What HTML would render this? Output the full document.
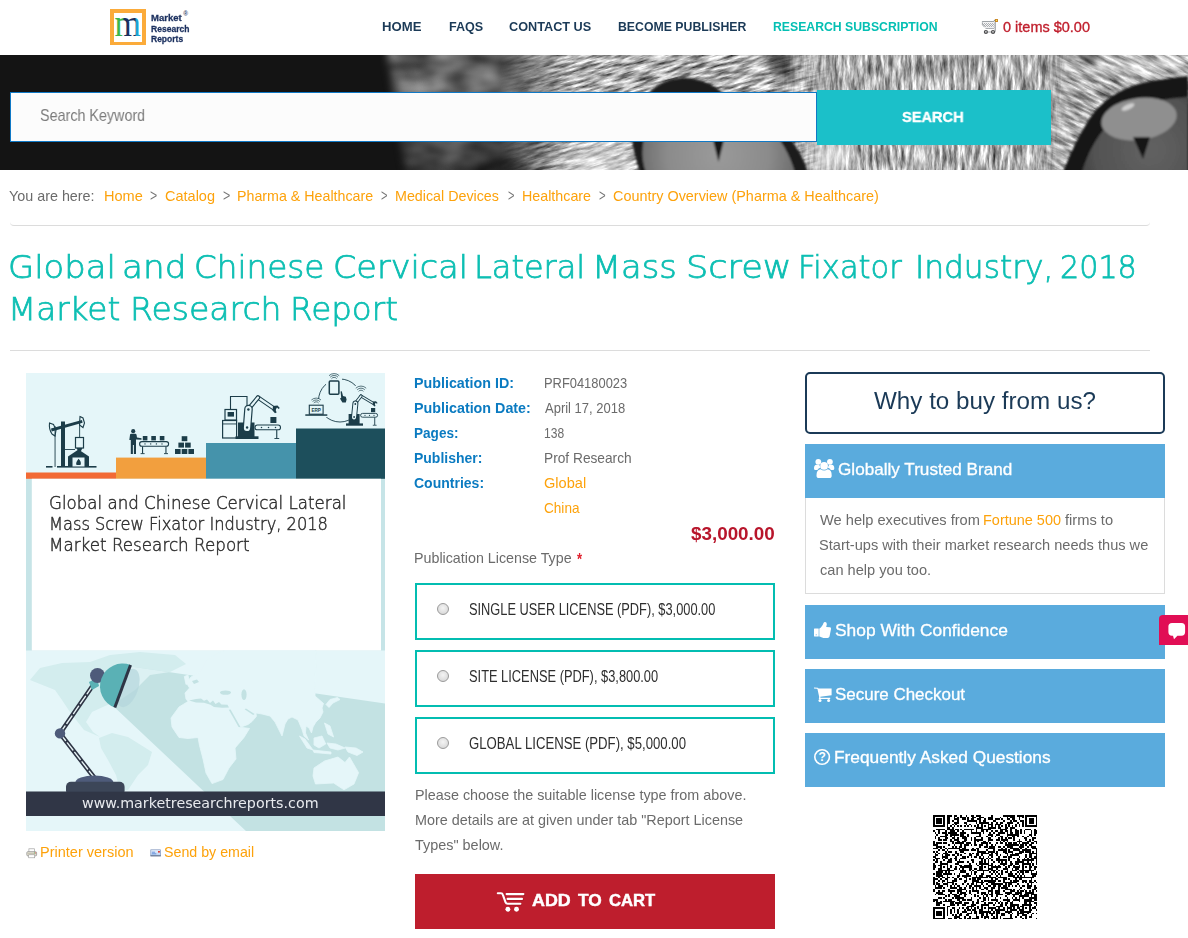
<!DOCTYPE html>
<html lang="en">
<head>
<meta charset="utf-8">
<title>Global and Chinese Cervical Lateral Mass Screw Fixator Industry, 2018 Market Research Report</title>
<style>
*{box-sizing:border-box;margin:0;padding:0}
html,body{width:1188px;height:938px;overflow:hidden;background:#fff}
body{font-family:"Liberation Sans",sans-serif;color:#666;position:relative}
.t{position:absolute;white-space:nowrap;display:block}
.b{position:absolute}
svg{position:absolute;overflow:visible}
#logo{left:110px;top:9px;width:36px;height:36px;border:4px solid #fbab3a;border-bottom-width:3px;background:#fff}
#banner{left:0;top:55px;width:1188px;height:115px;background:#141414;overflow:hidden}
#sinput{left:10px;top:92px;width:807px;height:50px;background:#fcfcfc;border:1px solid #1079c6}
#sbtn{left:817px;top:90px;width:234px;height:55px;background:#1bc0c9}
.hr{position:absolute;left:10px;width:1140px;height:1px;background:#dcdcdc}
.hr.r{height:5px;background:none;border-bottom:1px solid #dcdcdc;border-radius:0 0 4px 4px}
.lic{position:absolute;left:415px;width:360px;height:57px;border:2px solid #03bdb1;background:#fff}
.radio{position:absolute;left:20px;top:17.7px;width:12px;height:12px;border-radius:50%;border:1px solid #9a9a9a;background:radial-gradient(circle at 50% 40%,#f4f4f4 0,#dcdcdc 70%,#cfcfcf 100%)}
#cartbtn{left:415px;top:874px;width:360.3px;height:54.5px;background:#be1e2d}
#why{left:805px;top:371.6px;width:360px;height:62.2px;border:2px solid #1b3a57;border-radius:5px;background:#fff}
.sh{position:absolute;left:805px;width:360px;height:53.6px;background:#5aabdd}
#sbody{left:805px;top:497.6px;width:360px;height:96.8px;border:1px solid #dcdcdc;border-top:0;background:#fff}
#chat{left:1159px;top:615px;width:40px;height:30px;background:#e10e55;border-radius:4px 0 0 0}
</style>
</head>
<body>
<!-- header -->
<div class="b" id="logo"></div>
<svg width="36" height="36" viewBox="110 9 36 36" style="left:110px;top:9px"><defs><linearGradient id="mg" x1="0" x2="1" y1="0" y2="0"><stop offset="0" stop-color="#3bb54a"/><stop offset="0.30" stop-color="#3bb54a"/><stop offset="0.36" stop-color="#1a2f5e"/><stop offset="0.76" stop-color="#1a2f5e"/><stop offset="0.82" stop-color="#1ca3d4"/><stop offset="1" stop-color="#1ca3d4"/></linearGradient></defs><text x="114.6" y="35.6" font-family="Liberation Serif,serif" font-size="37" textLength="26.4" lengthAdjust="spacingAndGlyphs" fill="url(#mg)">m</text></svg>

<svg width="18" height="17" viewBox="981 18 18 17" style="left:981px;top:18px">
<defs><clipPath id="bk"><path d="M982.4 21.5 H994.6 V28.2 H985.7 L982.4 24.8 Z"/></clipPath></defs>
<path d="M982.4 21.5 H994.6 V28.2 H985.7 L982.4 24.8 Z" fill="#f4f5f6"/>
<g clip-path="url(#bk)" stroke="#8f9296" stroke-width="0.5" fill="none"><path d="M983 29 L990 22 M985 29 L992 22 M987 29 L994 22 M989 29 L996 22 M981 29 L988 22 M979 29 L986 22 M983 22 L990 29 M985 22 L992 29 M987 22 L994 29 M989 22 L996 29 M981 22 L988 29 M991 22 L998 29"/></g>
<path d="M982.4 21.5 H993.4 M982.4 21.3 V24.8 L985.7 28.3 H994" fill="none" stroke="#858b90" stroke-width="0.8"/>
<path d="M982.6 22.6 H994.6 M983.6 27.4 H994" stroke="#f4f5f6" stroke-width="1" fill="none"/>
<path d="M993.2 21.6 L995.2 19.8 V30.8 Q995.2 32.6 993.6 32.8" fill="none" stroke="#7d8388" stroke-width="0.9"/>
<rect x="987.6" y="31.5" width="4" height="1" fill="#a9acb0"/>
<rect x="994.95" y="19" width="3" height="3" fill="#c98520"/><rect x="995.9" y="19.9" width="1.1" height="1.1" fill="#f7e65a"/>
<circle cx="985.9" cy="32" r="2.1" fill="#4a4a4c"/><circle cx="985.9" cy="31.8" r="0.9" fill="#d8d8d8"/>
<circle cx="993" cy="32" r="2.1" fill="#4a4a4c"/><circle cx="993" cy="31.8" r="0.9" fill="#d8d8d8"/>
</svg>

<!-- banner -->
<div class="b" id="banner"><svg width="1188" height="115" viewBox="0 0 1188 115" style="left:0;top:0">
<defs>
<filter id="furH" x="0" y="0" width="100%" height="100%" color-interpolation-filters="sRGB">
<feTurbulence type="fractalNoise" baseFrequency="0.055 0.34" numOctaves="4" seed="7"/>
<feColorMatrix type="matrix" values="1.35 0 0 0 0.0  1.35 0 0 0 0.0  1.35 0 0 0 0.0  0 0 0 0 1"/>
<feGaussianBlur stdDeviation="0.5"/>
</filter>
<filter id="furV" x="0" y="0" width="100%" height="100%" color-interpolation-filters="sRGB">
<feTurbulence type="fractalNoise" baseFrequency="0.26 0.045" numOctaves="4" seed="11"/>
<feColorMatrix type="matrix" values="1.2 0 0 0 0.09  1.2 0 0 0 0.09  1.2 0 0 0 0.09  0 0 0 0 1"/>
<feGaussianBlur stdDeviation="0.5"/>
</filter>
<filter id="blob" x="0" y="0" width="100%" height="100%" color-interpolation-filters="sRGB">
<feTurbulence type="fractalNoise" baseFrequency="0.03 0.05" numOctaves="2" seed="3"/>
<feColorMatrix type="matrix" values="0.6 0 0 0 0.08  0.6 0 0 0 0.08  0.6 0 0 0 0.08  0 0 0 0 1"/>
</filter>
<filter id="bl8"><feGaussianBlur stdDeviation="8"/></filter>
<filter id="bl4"><feGaussianBlur stdDeviation="4"/></filter>
<filter id="bl2"><feGaussianBlur stdDeviation="2"/></filter>
<filter id="bl1"><feGaussianBlur stdDeviation="0.9"/></filter>
<linearGradient id="gA" x1="0" x2="1" y1="0" y2="0"><stop offset="0" stop-color="#000"/><stop offset="0.2" stop-color="#fff"/><stop offset="0.9" stop-color="#fff"/><stop offset="1" stop-color="#000"/></linearGradient>
<linearGradient id="gB" x1="0" x2="1" y1="0" y2="0"><stop offset="0" stop-color="#000"/><stop offset="0.22" stop-color="#fff"/><stop offset="0.8" stop-color="#fff"/><stop offset="1" stop-color="#000"/></linearGradient>
<linearGradient id="gD" x1="0" x2="0" y1="0" y2="1"><stop offset="0" stop-color="#000" stop-opacity="0"/><stop offset="0.45" stop-color="#000" stop-opacity="0.05"/><stop offset="1" stop-color="#000" stop-opacity="0.42"/></linearGradient>
<linearGradient id="gZr" x1="0" x2="1" y1="0" y2="0"><stop offset="0" stop-color="#000" stop-opacity="0"/><stop offset="0.7" stop-color="#000" stop-opacity="1"/><stop offset="1" stop-color="#000" stop-opacity="1"/></linearGradient>
<linearGradient id="gZ" x1="0" x2="1" y1="0" y2="0"><stop offset="0" stop-color="#000"/><stop offset="0.1" stop-color="#fff"/><stop offset="0.7" stop-color="#fff"/><stop offset="1" stop-color="#000"/></linearGradient>
<mask id="mZ"><path d="M386 -10 L600 -10 L600 125 L408 125 Q398 60 386 -10 Z" fill="#fff" filter="url(#bl4)"/><rect x="540" y="0" width="80" height="115" fill="url(#gZr)"/></mask>
<mask id="mA"><rect x="500" y="0" width="350" height="115" fill="url(#gA)"/></mask>
<mask id="mB"><rect x="770" y="0" width="340" height="115" fill="url(#gB)"/></mask>
<mask id="mC"><path d="M1062 -20 L1210 -20 L1210 40 C1140 42 1090 70 1070 135 L1046 135 Z" fill="#fff" filter="url(#bl8)"/></mask>
<radialGradient id="irisL" gradientUnits="userSpaceOnUse" cx="718" cy="100" r="85"><stop offset="0" stop-color="#9a9a9a"/><stop offset="0.6" stop-color="#8b8b8b"/><stop offset="1" stop-color="#666"/></radialGradient>
<radialGradient id="irisR" gradientUnits="userSpaceOnUse" cx="1150" cy="95" r="80"><stop offset="0" stop-color="#626262"/><stop offset="0.7" stop-color="#525252"/><stop offset="1" stop-color="#3a3a3a"/></radialGradient>
<clipPath id="cb"><rect width="1188" height="115"/></clipPath>
</defs>
<g clip-path="url(#cb)">
<rect width="1188" height="115" fill="#141414"/>
<!-- blurry left cheek -->
<g mask="url(#mZ)"><rect x="380" y="0" width="230" height="115" filter="url(#blob)"/><rect x="380" y="0" width="230" height="115" fill="url(#gD)"/></g>
<!-- diagonal fur -->
<g mask="url(#mA)"><g transform="rotate(-16 640 20)"><rect x="460" y="-140" width="460" height="400" filter="url(#furH)"/></g></g>
<!-- vertical fur -->
<g mask="url(#mB)"><rect x="770" y="0" width="340" height="115" filter="url(#furV)"/></g>
<!-- fur over right eye -->
<g mask="url(#mC)"><g transform="rotate(-64 1100 60)"><rect x="950" y="-90" width="300" height="320" filter="url(#furV)"/></g></g>
<!-- soft tonal shading -->
<g filter="url(#bl8)">
<ellipse cx="600" cy="108" rx="40" ry="22" fill="#fff" opacity="0.45"/>
<ellipse cx="830" cy="104" rx="22" ry="20" fill="#fff" opacity="0.5"/>
<ellipse cx="1135" cy="10" rx="60" ry="9" fill="#fff" opacity="0.4"/>
<ellipse cx="510" cy="112" rx="16" ry="12" fill="#000" opacity="0.5"/>
</g>
<g filter="url(#bl4)">
<path d="M762 -5 L790 -5 L794 28 L780 22 Z" fill="#000" opacity="0.6"/>
<path d="M1080 -5 L1100 -5 L1096 10 L1084 10 Z" fill="#000" opacity="0.6"/>
</g>
<!-- left eye -->
<g filter="url(#bl1)">
<path d="M632 84 C630 56 650 23 684 23 C704 23 718 33 726 41 C762 52 800 84 808 118 L640 118 C636 104 633 94 632 84 Z" fill="#1b1b1b"/>
<path d="M646 118 C634 84 652 46 700 40 C756 44 786 84 795 118 Z" fill="url(#irisL)"/>
<path d="M713 85 L724 85 L718.5 107 Z" fill="#171717"/>
</g>
<!-- right eye -->
<g filter="url(#bl1)">
<path d="M1061 120 L1064 115 C1070 98 1078 82 1088 66 C1098 50 1112 38 1135 30 C1152 25 1170 23 1188 21 L1188 120 Z" fill="#151515"/>
<path d="M1081 120 C1088 95 1100 76 1114 64 C1130 50 1160 44 1188 42 L1188 120 Z" fill="url(#irisR)"/>
<ellipse cx="1139" cy="64" rx="38" ry="21" transform="rotate(-8 1139 64)" fill="#8f8f8f"/>
<ellipse cx="1128" cy="52" rx="7" ry="2.6" transform="rotate(-25 1128 52)" fill="#d0d0d0"/>
<path d="M1133 82 L1150 82 L1143 104 Z" fill="#141414"/>
</g>
</g>
</svg>
</div>
<div class="b" id="sinput"></div>
<div class="b" id="sbtn"></div>
<div class="hr r" style="top:221px"></div>
<div class="hr" style="top:350px"></div>
<!-- cover -->
<svg width="359" height="458" viewBox="26 373 359 458" style="left:26px;top:373px">
<defs>
<clipPath id="cone"><path d="M130.5 666.5 L386 703.6 L386 832 L247 832 L114.8 707.5 Z"/></clipPath>
<clipPath id="btm"><rect x="26" y="650.5" width="359" height="181"/></clipPath>
<clipPath id="cvr"><rect x="26" y="373" width="359" height="458"/></clipPath>
<g id="landE" stroke-linejoin="round">
<path d="M186 699 L185 693 L189.5 688 L186.5 683 L191 677 L200 672 L206 660 L232 646 L316 646 L315 696 L319 699.5 L323.5 703.5 L322 708 L323 712 L320 718 L316 722 L313 727 L311.5 733 L309 728 L306 726 L305.5 733 L308.6 740 L304 736 L302 729.5 L298 720 L292 717 L288 719 L285 724 L282 736 L279 730 L275 722 L270 716 L262 714 L256 713 L256.4 716.4 L252 721.5 L248 724.5 L240.5 727.2 L249.5 728.5 L244 737.5 L235 748 L236 759 L229 768 L223 779.5 L212 783.6 L206 773 L203 759 L199.5 745.5 L198 737.5 L188 738.5 L179 737.5 L172 727 L171 718 L179 707 L188 701.5 Z"/>
<path d="M184.3 676.5 L188 675 L189.6 682.5 L186 684.5 Z"/>
<path d="M326 704.5 L330 699.5 L337.5 697.5 L340 699.5 L333 703 L329 707.5 Z"/>
<path d="M324.5 723 L330 726 L333.6 737 L328 734 Z"/>
<path d="M299.5 736 L305 739 L313 750 L307 748 Z"/>
<path d="M313 750 L331 752 L331 754 L314 752.5 Z"/>
<path d="M314 738 L322 736 L325.7 744 L319 748 L314 745 Z"/>
<path d="M327 743 L336 744 L345 748 L338 750 L330 748 Z"/>
<path d="M345 747 L356 748 L363 752 L357 755.5 L348 752 Z"/>
<path d="M314 768 L324.5 761 L338 757 L345 762.5 L349.5 757 L358.6 772.7 L354 784 L344 789.8 L333.6 783 L315.5 784 L313 776 Z"/>
</g>
<g id="seas">
<path d="M189 700.6 L196 699 L201 698.6 L204 700.8 L207 699.4 L210 703 L213 700.6 L215.5 704 L219 702 L221.5 704.6 L227.5 704.8 L229 707.6 L222 707.8 L214 707 L210.5 704.8 L204 702.8 L196 702.6 Z"/>
<ellipse cx="225.5" cy="692.6" rx="5.6" ry="2.2"/>
<ellipse cx="244" cy="694.6" rx="2.6" ry="5.4"/>
<path d="M228.8 709.8 L230.6 709.4 L240.6 727.2 L238.6 727 Z"/>
<path d="M244.6 709.2 L246 708.6 L254.6 714 L253.2 715 Z"/>
<path d="M192 681 L197 679.5 L199 682 L194 684 Z"/>
</g>
<g id="landW">
<path d="M30 680 L40 668 L62 663 L90 662 L110 655 L140 652 L175 655 L186 664 L170 672 L150 675 L135 690 L120 700 L105 706 L92 712 L86 722 L93 732 L100 737 L84 730 L70 712 L62 700 L55 690 L45 686 Z"/>
<path d="M99 738 L112 733 L128 737 L152 752 L148 765 L138 775 L128 790 L120 791 L116 775 L108 760 L101 748 Z"/>
</g>
</defs>
<g clip-path="url(#cvr)">
<rect x="26" y="373" width="359" height="458" fill="#e5f6f9"/>
<!-- steps -->
<rect x="26" y="472.5" width="90" height="6.5" fill="#f26a35"/>
<rect x="116" y="457.6" width="90" height="21.4" fill="#f29f3e"/>
<rect x="206" y="443" width="90" height="36" fill="#4593ab"/>
<rect x="296" y="428.5" width="89" height="50.5" fill="#1d4f5c"/>
<!-- white panel -->
<rect x="26" y="478.8" width="359" height="171.7" fill="#c6e4e7"/>
<rect x="31.8" y="478.8" width="349.2" height="171.7" fill="#fff"/>
<!-- map -->
<use href="#landW" fill="#d3edee"/>
<g clip-path="url(#cone)">
<rect x="26" y="640" width="359" height="200" fill="#c3e2e3"/>
<use href="#landW" fill="#dcf1f3"/>
<ellipse cx="128" cy="688" rx="10" ry="20" transform="rotate(20 128 688)" fill="#b3d6dc" opacity=".7"/>
</g>
<g clip-path="url(#btm)"><use href="#landE" fill="#e5f6f9" stroke="#e5f6f9" stroke-width="0.8"/>
<use href="#seas" fill="#c3e2e3"/></g>
<!-- band -->
<rect x="26" y="791.7" width="359" height="24.3" fill="#303646"/>
<!-- lamp -->
<g stroke-linecap="round">
<line x1="60" y1="733.4" x2="93.8" y2="777" stroke="#2e3545" stroke-width="4.6"/>
<line x1="60" y1="733.4" x2="93.8" y2="777" stroke="#e8f4f6" stroke-width="1.4" stroke-dasharray="9 3"/>
<line x1="60" y1="733.4" x2="92.8" y2="685.5" stroke="#2e3545" stroke-width="4.6"/>
<line x1="60" y1="733.4" x2="92.8" y2="685.5" stroke="#e8f4f6" stroke-width="1.4" stroke-dasharray="9 3"/>
</g>
<circle cx="60" cy="733.4" r="5.2" fill="#4e5b7a"/>
<path d="M89 682 L97 678 L99 686 L92 690 Z" fill="#5ab1b5"/>
<circle cx="97.5" cy="675.5" r="7.5" fill="#4e5b7a"/>
<path d="M130.5 665 A22.65 22.65 0 0 0 114.8 707.5 Z" fill="#5ab1b5"/>
<line x1="130.5" y1="665" x2="114.8" y2="707.5" stroke="#2e3545" stroke-width="3"/>
<ellipse cx="94.4" cy="782.5" rx="19" ry="7" fill="#4e5b7a"/>
<rect x="66" y="781.8" width="58.6" height="14" rx="5" fill="#3c4658"/>
<rect x="26" y="791.7" width="359" height="24.3" fill="#303646"/>
<g fill="#1c3d49" stroke="none">
<!-- pump jack -->
<rect x="46" y="466" width="6.5" height="1.6"/><rect x="57" y="466" width="39.5" height="1.6"/>
<rect x="54.6" y="426" width="0.9" height="41"/>
<rect x="61" y="421.5" width="4" height="45"/>
<path d="M51 428.5 L82 420 L82.6 422.8 L51.7 431.5 Z"/>
<path d="M49.5 423 L53.5 424.5 L56 430 L55 436 L52 434 C50 431 49 427 49.5 423 Z" fill="none" stroke="#1c3d49" stroke-width="1.1"/>
<path d="M80 416.5 L83 418 L84.5 423 L83 427.5 L79.5 425 Z" fill="none" stroke="#1c3d49" stroke-width="1.1"/>
<rect x="79.2" y="424" width="0.9" height="14"/>
<rect x="75.5" y="437.5" width="8" height="10.5" fill="#e5f6f9" stroke="#1c3d49" stroke-width="1.2"/>
<path d="M76.5 448 L82.5 448 L81 451 L78 451 Z"/>
<rect x="65" y="449" width="10" height="0.9"/>
<path d="M68 456.5 L78.5 449.5 L89 456.5 L89 466.5 L68 466.5 Z"/>
<rect x="72.5" y="457.5" width="12" height="9" fill="#e5f6f9"/>
<path d="M78.5 458.8 C80.5 461 81.5 462.5 80.5 465 L76.5 465 C75.5 463 76.8 461.5 78.5 458.8 Z"/>
<!-- worker -->
<circle cx="133.2" cy="431.2" r="2.1"/>
<path d="M130 435 Q130 433.8 131.2 433.8 L135.2 433.8 Q136.4 433.8 136.6 435 L137 437.6 L141.5 438.3 L141.5 439.8 L136 439.4 L136 454 L133.9 454 L133.9 445 L132.9 445 L132.9 454 L130.8 454 L130.8 440 L129.3 440 Z"/>
<rect x="142.8" y="436" width="4.6" height="4.4"/><rect x="151.3" y="436" width="4.6" height="4.4"/><rect x="159.8" y="436" width="4.6" height="4.4"/>
<rect x="139.6" y="441.6" width="29" height="4.6" rx="2.3" fill="#e5f6f9" stroke="#1c3d49" stroke-width="1.1"/>
<circle cx="145" cy="443.9" r="0.7"/><circle cx="150.7" cy="443.9" r="0.7"/><circle cx="156.4" cy="443.9" r="0.7"/><circle cx="162" cy="443.9" r="0.7"/>
<rect x="142" y="446.5" width="1.1" height="7"/><rect x="165.4" y="446.5" width="1.1" height="7"/><rect x="140.6" y="453.2" width="4" height="0.9"/><rect x="164" y="453.2" width="4" height="0.9"/>
<!-- pile -->
<rect x="175" y="449" width="5.6" height="5"/><rect x="181.7" y="449" width="5.6" height="5"/><rect x="188.4" y="449" width="5.6" height="5"/>
<rect x="178.4" y="442.6" width="5.6" height="5"/><rect x="185.1" y="442.6" width="5.6" height="5"/>
<rect x="181.7" y="436.2" width="5.6" height="5"/>
<!-- robot 1 -->
<path d="M230.5 409 L230.5 396.5 L247 396.5 L247 406" fill="none" stroke="#1c3d49" stroke-width="1.1"/>
<rect x="222.6" y="420.5" width="14" height="17.5" fill="#e5f6f9" stroke="#1c3d49" stroke-width="1.2"/>
<rect x="222.6" y="423.5" width="14" height="0.9"/>
<rect x="225" y="409.5" width="11.5" height="10.5" fill="#e5f6f9" stroke="#1c3d49" stroke-width="1.2"/>
<rect x="227.6" y="412" width="6.4" height="4.6"/>
<rect x="238" y="422.5" width="16.5" height="14.5"/><rect x="235.5" y="436.3" width="23" height="2.7"/>
<path d="M258 397.5 L274 408.5" fill="none" stroke="#1c3d49" stroke-width="4.4" stroke-linecap="round"/>
<path d="M258 397.5 L274 408.5" fill="none" stroke="#e5f6f9" stroke-width="2.2" stroke-linecap="round"/>
<path d="M248.5 409 L258 397.5" fill="none" stroke="#1c3d49" stroke-width="4.4" stroke-linecap="round"/>
<path d="M248.5 409 L258 397.5" fill="none" stroke="#e5f6f9" stroke-width="2.2" stroke-linecap="round"/>
<path d="M247 428 L248.5 409" fill="none" stroke="#1c3d49" stroke-width="8.6" stroke-linecap="round"/>
<path d="M247 428 L248.5 409" fill="none" stroke="#e5f6f9" stroke-width="6.2" stroke-linecap="round"/>
<circle cx="248.4" cy="409.5" r="1.2"/><circle cx="247.1" cy="427.5" r="1.2"/>
<path d="M273 406 L277.5 405.5 L279.8 408 L278.6 409 L277 407.6 L275.5 409.5 L276.6 412.4 L275 413.2 L272.5 410.5 Z"/>
<rect x="270.4" y="417" width="6" height="6"/>
<rect x="255" y="425" width="25.5" height="4.8" rx="2.4" fill="#e5f6f9" stroke="#1c3d49" stroke-width="1.1"/>
<circle cx="261.5" cy="427.4" r="0.75"/><circle cx="268.5" cy="427.4" r="0.75"/><circle cx="275.5" cy="427.4" r="0.75"/>
<rect x="276.2" y="430" width="1.1" height="8.5"/><rect x="274.4" y="438" width="4.8" height="0.9"/>
<!-- IoT -->
<circle cx="340" cy="400.5" r="21.5" fill="none" stroke="#1c3d49" stroke-width="0.9"/>
<rect x="305" y="399" width="23" height="18" fill="#e5f6f9"/>
<rect x="326" y="378" width="16" height="20" fill="#e5f6f9"/>
<rect x="350" y="386" width="30" height="40" fill="#e5f6f9"/>
<rect x="329.3" y="381" width="9.6" height="13.2" rx="1" fill="#e5f6f9" stroke="#1c3d49" stroke-width="1.5"/>
<g fill="none" stroke="#1c3d49" stroke-width="0.7"><path d="M331.5 378.7 A3.2 3.2 0 0 1 336.7 378.7"/><path d="M330.2 377.2 A5.2 5.2 0 0 1 338 377.2"/><path d="M329 375.7 A7.2 7.2 0 0 1 339.2 375.7"/></g>
<path d="M340.6 391.5 L341.8 391.2 L343 396 L345.8 396.8 L346.6 399.6 L345.8 402.6 L342.4 402.6 L340 398.6 L341.2 397.8 Z"/>
<rect x="309.3" y="405.2" width="13.8" height="9" fill="#e5f6f9" stroke="#1c3d49" stroke-width="1.1"/>
<rect x="305.3" y="414.3" width="22" height="1.5"/>
<g fill="none" stroke="#1c3d49" stroke-width="0.7"><path d="M313.8 403 A3 3 0 0 1 318.6 403"/><path d="M312.6 401.5 A5 5 0 0 1 319.8 401.5"/><path d="M311.4 400 A7 7 0 0 1 321 400"/></g>
<g fill="none" stroke="#1c3d49" stroke-width="0.7"><path d="M358.6 391.4 A3 3 0 0 1 363.4 391.4"/><path d="M357.2 389.8 A5.2 5.2 0 0 1 364.8 389.8"/><path d="M355.8 388.2 A7.4 7.4 0 0 1 366.2 388.2"/></g>
<rect x="348.6" y="414" width="11" height="10"/><rect x="346" y="423.4" width="17" height="2.3"/>
<path d="M361 396 L373.5 403.5" fill="none" stroke="#1c3d49" stroke-width="3.2" stroke-linecap="round"/>
<path d="M361 396 L373.5 403.5" fill="none" stroke="#e5f6f9" stroke-width="1.4" stroke-linecap="round"/>
<path d="M355.6 403 L361 396" fill="none" stroke="#1c3d49" stroke-width="3.2" stroke-linecap="round"/>
<path d="M355.6 403 L361 396" fill="none" stroke="#e5f6f9" stroke-width="1.4" stroke-linecap="round"/>
<path d="M354 417.5 L355.4 403.5" fill="none" stroke="#1c3d49" stroke-width="6" stroke-linecap="round"/>
<path d="M354 417.5 L355.4 403.5" fill="none" stroke="#e5f6f9" stroke-width="4" stroke-linecap="round"/>
<circle cx="355.3" cy="404" r="0.9"/><circle cx="354.1" cy="417" r="0.9"/>
<path d="M373 401.5 L376 401.2 L377.6 403 L376.8 403.7 L375.8 402.8 L374.8 404 L375.5 406 L374.4 406.5 L372.6 404.6 Z"/>
<rect x="371" y="408" width="4.2" height="4.2"/>
<rect x="360.6" y="413.4" width="17" height="3.8" rx="1.9" fill="#e5f6f9" stroke="#1c3d49" stroke-width="0.9"/>
<circle cx="365" cy="415.3" r="0.6"/><circle cx="369.5" cy="415.3" r="0.6"/><circle cx="374" cy="415.3" r="0.6"/>
<rect x="374.3" y="417.4" width="0.9" height="7.6"/><rect x="372.8" y="424.8" width="3.8" height="0.8"/>
<text x="316.2" y="411.6" font-family="Liberation Sans,sans-serif" font-size="4.6" font-weight="bold" text-anchor="middle" fill="#1c3d49">ERP</text>
</g>

</g>
</svg>

<svg width="12" height="11" viewBox="25.5 847.5 12 11" style="left:25.5px;top:847.5px">
<rect x="28.4" y="848.3" width="5.6" height="3.4" fill="#fff" stroke="#a2a2a2" stroke-width="0.7"/>
<rect x="26.3" y="851.2" width="9.8" height="4.2" rx="1" fill="#e4e1d2" stroke="#8c8c8c" stroke-width="0.7"/>
<rect x="28.2" y="854.3" width="6" height="3" fill="#fff" stroke="#9a9a9a" stroke-width="0.6"/>
<rect x="27.2" y="852.9" width="8" height="0.7" fill="#b5b29f"/>
<rect x="33.6" y="852" width="0.9" height="0.8" fill="#4caf50"/><rect x="34.7" y="852" width="0.9" height="0.8" fill="#e53935"/>
</svg>
<svg width="12" height="8" viewBox="149.5 848.6 12 8" style="left:149.5px;top:848.6px">
<defs><linearGradient id="mailg" x1="0" x2="0" y1="0" y2="1"><stop offset="0" stop-color="#eef4fd"/><stop offset="1" stop-color="#b4cdee"/></linearGradient></defs>
<rect x="150.3" y="849.4" width="9.7" height="6" fill="url(#mailg)" stroke="#7f95bd" stroke-width="0.7"/>
<rect x="150" y="855.1" width="10.3" height="0.8" fill="#4d5a74"/>
<rect x="157.5" y="850.6" width="1.9" height="1.6" fill="#e03a30"/>
<path d="M151.4 851.8 H154.6 M151.4 853.4 H155.8" stroke="#3f73d0" stroke-width="0.7"/>
</svg>

<!-- license -->
<div class="lic" style="top:583px"><div class="radio"></div></div>
<div class="lic" style="top:650px"><div class="radio"></div></div>
<div class="lic" style="top:717px"><div class="radio"></div></div>
<div class="b" id="cartbtn"></div>
<svg width="30" height="24" viewBox="495 889 30 24" style="left:495px;top:889px">
<g fill="none" stroke="#8e1420" stroke-opacity=".45" stroke-width="2.1" stroke-linecap="round" stroke-linejoin="round" transform="translate(0.7 0.8)"><path d="M497.8 893.2 L501 893.2 Q502.4 893.2 502.9 894.8 L505.6 902.4 Q506.1 903.8 507.6 903.8 L520.4 903.8"/><path d="M506.6 894.1 H523.4 M507.6 898.9 H522"/></g>
<g fill="none" stroke="#fff" stroke-width="2.1" stroke-linecap="round" stroke-linejoin="round"><path d="M497.8 893.2 L501 893.2 Q502.4 893.2 502.9 894.8 L505.6 902.4 Q506.1 903.8 507.6 903.8 L520.4 903.8"/><path d="M506.6 894.1 H523.4 M507.6 898.9 H522"/></g>
<circle cx="507.9" cy="909.3" r="2.45" fill="#fff"/><circle cx="516.5" cy="909.3" r="2.45" fill="#fff"/>
</svg>

<!-- sidebar -->
<div class="b" id="why"></div>
<div class="sh" style="top:444px"></div>
<div class="b" id="sbody"></div>
<div class="sh" style="top:605px"></div>
<div class="sh" style="top:669px"></div>
<div class="sh" style="top:733.2px"></div>
<svg width="24" height="22" viewBox="812 458 24 22" style="left:812px;top:458px"><g fill="#fff">
<circle cx="818.3" cy="461.8" r="2.9"/><circle cx="829.9" cy="461.8" r="2.9"/>
<path d="M814 468.4 Q814 464.8 816.6 464.8 L819.2 464.8 Q820 466.8 820.6 467.6 Q818.4 468.6 817.4 470 L815.4 470 Q814 470 814 468.4 Z"/>
<path d="M834.3 468.4 Q834.3 464.8 831.7 464.8 L829.1 464.8 Q828.3 466.8 827.7 467.6 Q829.9 468.6 830.9 470 L832.9 470 Q834.3 470 834.3 468.4 Z"/>
<circle cx="824.1" cy="465.9" r="3.85"/>
<path d="M816.5 475.4 Q816.5 469.5 820.6 469.3 Q822.2 470.6 824.1 470.6 Q826 470.6 827.6 469.3 Q831.7 469.5 831.7 475.4 Q831.7 478 829.2 478 L819 478 Q816.5 478 816.5 475.4 Z"/>
</g></svg>
<svg width="20" height="18" viewBox="813 620.5 20 18" style="left:813px;top:620.5px"><g fill="#fff">
<rect x="814" y="628" width="4.3" height="8" rx="0.4"/><rect x="818.3" y="628" width="1.4" height="8" opacity=".8"/>
<path d="M819.7 628 C821.8 626.6 822.9 624.2 823.5 622.5 Q824.1 621.4 825.3 621.6 Q827 622 826.8 624 L826.2 626.6 L830 626.7 Q831.3 626.9 831 628.5 L829.5 636 Q829.1 637.4 827.6 637.5 L823.4 637.5 Q821.2 637.1 819.7 636.1 Z"/>
</g><circle cx="816.2" cy="634.2" r="0.55" fill="#5aabdd"/></svg>
<svg width="20" height="16" viewBox="813 686.5 20 16" style="left:813px;top:686.5px"><g fill="#fff">
<path d="M814 686.9 L817.6 687.3 Q818.4 687.4 818.6 688.2 L818.7 688.1 L831.6 688.1 L831.6 694.8 L820.3 696.2 L820.5 697.2 L830.2 697.2 L830.2 698.6 L818.8 698.6 L819.2 696.4 L817.4 688.3 L814 688 Z"/>
<circle cx="820" cy="700" r="1.5"/><circle cx="828.6" cy="700" r="1.5"/>
</g></svg>
<svg width="18" height="18" viewBox="813 748.4 18 18" style="left:813px;top:748.4px"><circle cx="822.1" cy="757.4" r="7.3" fill="none" stroke="#fff" stroke-width="1.6"/><text x="822.1" y="761.7" font-family="Liberation Sans,sans-serif" font-weight="bold" font-size="12" text-anchor="middle" fill="#fff">?</text></svg>

<div class="b" id="chat"></div>
<svg width="30" height="30" viewBox="1159 615 30 30" style="left:1159px;top:615px"><path d="M1172 623 H1181.5 Q1185.1 623 1185.1 626.6 V632.1 Q1185.1 635.7 1181.5 635.7 H1177.4 L1174 639.2 L1173 635.7 H1172 Q1168.4 635.7 1168.4 632.1 V626.6 Q1168.4 623 1172 623 Z" fill="#fff"/></svg>

<svg width="104.4" height="104.4" viewBox="0 0 61 61" style="left:932.8px;top:814.6px" shape-rendering="crispEdges"><rect width="61" height="61" fill="#fff"/><path d="M0 0h7v1h-7zM8 0h3v1h-3zM12 0h2v1h-2zM16 0h1v1h-1zM19 0h1v1h-1zM22 0h2v1h-2zM25 0h3v1h-3zM34 0h1v1h-1zM41 0h7v1h-7zM49 0h4v1h-4zM54 0h7v1h-7zM0 1h1v1h-1zM6 1h1v1h-1zM8 1h2v1h-2zM12 1h1v1h-1zM14 1h1v1h-1zM16 1h3v1h-3zM20 1h1v1h-1zM23 1h2v1h-2zM27 1h3v1h-3zM32 1h3v1h-3zM39 1h1v1h-1zM43 1h1v1h-1zM45 1h3v1h-3zM50 1h1v1h-1zM52 1h1v1h-1zM54 1h1v1h-1zM60 1h1v1h-1zM0 2h1v1h-1zM2 2h3v1h-3zM6 2h1v1h-1zM8 2h2v1h-2zM12 2h3v1h-3zM17 2h2v1h-2zM20 2h1v1h-1zM22 2h2v1h-2zM26 2h2v1h-2zM30 2h1v1h-1zM32 2h3v1h-3zM36 2h3v1h-3zM40 2h1v1h-1zM43 2h2v1h-2zM46 2h2v1h-2zM50 2h1v1h-1zM54 2h1v1h-1zM56 2h3v1h-3zM60 2h1v1h-1zM0 3h1v1h-1zM2 3h3v1h-3zM6 3h1v1h-1zM8 3h2v1h-2zM11 3h1v1h-1zM14 3h1v1h-1zM20 3h6v1h-6zM27 3h1v1h-1zM29 3h2v1h-2zM35 3h2v1h-2zM41 3h1v1h-1zM45 3h1v1h-1zM47 3h2v1h-2zM51 3h2v1h-2zM54 3h1v1h-1zM56 3h3v1h-3zM60 3h1v1h-1zM0 4h1v1h-1zM2 4h3v1h-3zM6 4h1v1h-1zM8 4h2v1h-2zM12 4h3v1h-3zM18 4h2v1h-2zM25 4h1v1h-1zM27 4h6v1h-6zM34 4h1v1h-1zM37 4h1v1h-1zM39 4h2v1h-2zM43 4h4v1h-4zM49 4h1v1h-1zM52 4h1v1h-1zM54 4h1v1h-1zM56 4h3v1h-3zM60 4h1v1h-1zM0 5h1v1h-1zM6 5h1v1h-1zM8 5h1v1h-1zM11 5h1v1h-1zM13 5h1v1h-1zM19 5h1v1h-1zM21 5h1v1h-1zM26 5h1v1h-1zM28 5h1v1h-1zM32 5h3v1h-3zM36 5h4v1h-4zM42 5h1v1h-1zM44 5h1v1h-1zM48 5h1v1h-1zM50 5h1v1h-1zM52 5h1v1h-1zM54 5h1v1h-1zM60 5h1v1h-1zM0 6h7v1h-7zM8 6h1v1h-1zM10 6h1v1h-1zM12 6h1v1h-1zM14 6h1v1h-1zM16 6h1v1h-1zM18 6h1v1h-1zM20 6h1v1h-1zM22 6h1v1h-1zM24 6h1v1h-1zM26 6h1v1h-1zM28 6h1v1h-1zM30 6h1v1h-1zM32 6h1v1h-1zM34 6h1v1h-1zM36 6h1v1h-1zM38 6h1v1h-1zM40 6h1v1h-1zM42 6h1v1h-1zM44 6h1v1h-1zM46 6h1v1h-1zM48 6h1v1h-1zM50 6h1v1h-1zM52 6h1v1h-1zM54 6h7v1h-7zM8 7h2v1h-2zM11 7h1v1h-1zM25 7h4v1h-4zM32 7h5v1h-5zM38 7h2v1h-2zM42 7h2v1h-2zM45 7h3v1h-3zM2 8h5v1h-5zM8 8h4v1h-4zM13 8h2v1h-2zM16 8h1v1h-1zM18 8h6v1h-6zM25 8h1v1h-1zM28 8h6v1h-6zM39 8h4v1h-4zM45 8h1v1h-1zM48 8h1v1h-1zM51 8h1v1h-1zM54 8h3v1h-3zM59 8h1v1h-1zM0 9h1v1h-1zM3 9h1v1h-1zM7 9h1v1h-1zM10 9h3v1h-3zM14 9h1v1h-1zM17 9h1v1h-1zM22 9h1v1h-1zM25 9h1v1h-1zM28 9h2v1h-2zM31 9h1v1h-1zM34 9h1v1h-1zM36 9h2v1h-2zM39 9h2v1h-2zM42 9h2v1h-2zM45 9h1v1h-1zM48 9h2v1h-2zM51 9h1v1h-1zM53 9h1v1h-1zM57 9h1v1h-1zM59 9h2v1h-2zM1 10h1v1h-1zM3 10h1v1h-1zM5 10h3v1h-3zM9 10h5v1h-5zM16 10h3v1h-3zM22 10h6v1h-6zM29 10h1v1h-1zM33 10h1v1h-1zM35 10h1v1h-1zM38 10h4v1h-4zM43 10h1v1h-1zM45 10h2v1h-2zM48 10h2v1h-2zM51 10h1v1h-1zM53 10h1v1h-1zM57 10h1v1h-1zM59 10h2v1h-2zM2 11h1v1h-1zM7 11h2v1h-2zM10 11h5v1h-5zM16 11h2v1h-2zM20 11h1v1h-1zM27 11h1v1h-1zM32 11h3v1h-3zM37 11h2v1h-2zM43 11h7v1h-7zM56 11h2v1h-2zM59 11h1v1h-1zM1 12h1v1h-1zM4 12h4v1h-4zM10 12h1v1h-1zM12 12h1v1h-1zM16 12h3v1h-3zM20 12h1v1h-1zM25 12h3v1h-3zM31 12h1v1h-1zM34 12h1v1h-1zM36 12h1v1h-1zM39 12h2v1h-2zM43 12h1v1h-1zM46 12h2v1h-2zM49 12h1v1h-1zM52 12h1v1h-1zM55 12h1v1h-1zM57 12h1v1h-1zM1 13h1v1h-1zM3 13h1v1h-1zM7 13h2v1h-2zM11 13h2v1h-2zM14 13h1v1h-1zM17 13h3v1h-3zM22 13h1v1h-1zM24 13h1v1h-1zM28 13h1v1h-1zM32 13h2v1h-2zM38 13h1v1h-1zM40 13h1v1h-1zM42 13h1v1h-1zM44 13h2v1h-2zM47 13h1v1h-1zM53 13h2v1h-2zM58 13h2v1h-2zM3 14h2v1h-2zM6 14h2v1h-2zM10 14h1v1h-1zM12 14h3v1h-3zM18 14h2v1h-2zM22 14h1v1h-1zM24 14h5v1h-5zM32 14h3v1h-3zM37 14h2v1h-2zM40 14h4v1h-4zM47 14h1v1h-1zM50 14h1v1h-1zM54 14h1v1h-1zM56 14h1v1h-1zM58 14h1v1h-1zM0 15h1v1h-1zM10 15h2v1h-2zM14 15h2v1h-2zM17 15h2v1h-2zM24 15h1v1h-1zM26 15h1v1h-1zM29 15h2v1h-2zM32 15h1v1h-1zM39 15h1v1h-1zM41 15h1v1h-1zM43 15h1v1h-1zM49 15h3v1h-3zM55 15h2v1h-2zM59 15h2v1h-2zM0 16h1v1h-1zM2 16h3v1h-3zM6 16h2v1h-2zM11 16h1v1h-1zM13 16h5v1h-5zM19 16h3v1h-3zM24 16h1v1h-1zM28 16h4v1h-4zM33 16h1v1h-1zM37 16h1v1h-1zM39 16h2v1h-2zM42 16h1v1h-1zM44 16h2v1h-2zM47 16h2v1h-2zM50 16h1v1h-1zM52 16h4v1h-4zM57 16h2v1h-2zM60 16h1v1h-1zM0 17h3v1h-3zM9 17h1v1h-1zM12 17h1v1h-1zM16 17h1v1h-1zM18 17h3v1h-3zM22 17h1v1h-1zM24 17h2v1h-2zM27 17h2v1h-2zM31 17h1v1h-1zM34 17h1v1h-1zM36 17h1v1h-1zM42 17h8v1h-8zM51 17h2v1h-2zM54 17h1v1h-1zM56 17h2v1h-2zM2 18h3v1h-3zM6 18h1v1h-1zM11 18h1v1h-1zM13 18h1v1h-1zM15 18h2v1h-2zM18 18h1v1h-1zM27 18h1v1h-1zM30 18h2v1h-2zM33 18h3v1h-3zM38 18h2v1h-2zM41 18h1v1h-1zM43 18h4v1h-4zM50 18h3v1h-3zM55 18h1v1h-1zM57 18h3v1h-3zM0 19h3v1h-3zM4 19h1v1h-1zM7 19h1v1h-1zM9 19h7v1h-7zM17 19h2v1h-2zM23 19h1v1h-1zM25 19h2v1h-2zM32 19h4v1h-4zM40 19h1v1h-1zM42 19h1v1h-1zM45 19h5v1h-5zM51 19h1v1h-1zM54 19h1v1h-1zM58 19h3v1h-3zM3 20h1v1h-1zM5 20h2v1h-2zM8 20h1v1h-1zM15 20h6v1h-6zM22 20h3v1h-3zM26 20h1v1h-1zM31 20h1v1h-1zM35 20h1v1h-1zM38 20h5v1h-5zM44 20h1v1h-1zM47 20h4v1h-4zM52 20h5v1h-5zM60 20h1v1h-1zM0 21h1v1h-1zM2 21h1v1h-1zM7 21h1v1h-1zM9 21h2v1h-2zM13 21h1v1h-1zM16 21h2v1h-2zM26 21h5v1h-5zM32 21h4v1h-4zM37 21h1v1h-1zM41 21h2v1h-2zM44 21h3v1h-3zM50 21h3v1h-3zM54 21h3v1h-3zM58 21h1v1h-1zM60 21h1v1h-1zM1 22h1v1h-1zM3 22h1v1h-1zM6 22h3v1h-3zM13 22h2v1h-2zM18 22h1v1h-1zM21 22h1v1h-1zM23 22h1v1h-1zM25 22h2v1h-2zM28 22h5v1h-5zM34 22h1v1h-1zM36 22h2v1h-2zM42 22h2v1h-2zM46 22h1v1h-1zM48 22h4v1h-4zM56 22h5v1h-5zM1 23h2v1h-2zM5 23h1v1h-1zM7 23h3v1h-3zM11 23h2v1h-2zM14 23h1v1h-1zM16 23h1v1h-1zM21 23h2v1h-2zM25 23h2v1h-2zM28 23h1v1h-1zM33 23h2v1h-2zM37 23h1v1h-1zM39 23h1v1h-1zM43 23h1v1h-1zM45 23h5v1h-5zM54 23h1v1h-1zM56 23h2v1h-2zM60 23h1v1h-1zM0 24h2v1h-2zM5 24h4v1h-4zM13 24h1v1h-1zM17 24h2v1h-2zM20 24h1v1h-1zM22 24h1v1h-1zM24 24h2v1h-2zM27 24h1v1h-1zM29 24h1v1h-1zM32 24h1v1h-1zM34 24h1v1h-1zM38 24h1v1h-1zM41 24h2v1h-2zM44 24h2v1h-2zM50 24h1v1h-1zM54 24h1v1h-1zM56 24h2v1h-2zM59 24h2v1h-2zM1 25h3v1h-3zM5 25h1v1h-1zM7 25h2v1h-2zM10 25h1v1h-1zM12 25h2v1h-2zM16 25h3v1h-3zM27 25h3v1h-3zM31 25h1v1h-1zM33 25h1v1h-1zM37 25h2v1h-2zM44 25h1v1h-1zM47 25h1v1h-1zM49 25h1v1h-1zM53 25h1v1h-1zM55 25h1v1h-1zM57 25h4v1h-4zM0 26h1v1h-1zM2 26h1v1h-1zM6 26h1v1h-1zM9 26h2v1h-2zM13 26h1v1h-1zM15 26h1v1h-1zM22 26h2v1h-2zM28 26h1v1h-1zM30 26h1v1h-1zM32 26h1v1h-1zM34 26h1v1h-1zM37 26h6v1h-6zM44 26h1v1h-1zM49 26h2v1h-2zM52 26h7v1h-7zM60 26h1v1h-1zM1 27h2v1h-2zM4 27h1v1h-1zM8 27h3v1h-3zM14 27h4v1h-4zM20 27h1v1h-1zM23 27h1v1h-1zM27 27h2v1h-2zM30 27h1v1h-1zM32 27h1v1h-1zM35 27h1v1h-1zM38 27h1v1h-1zM40 27h1v1h-1zM42 27h1v1h-1zM45 27h1v1h-1zM48 27h5v1h-5zM55 27h1v1h-1zM57 27h1v1h-1zM60 27h1v1h-1zM0 28h1v1h-1zM4 28h5v1h-5zM13 28h2v1h-2zM21 28h1v1h-1zM25 28h1v1h-1zM27 28h6v1h-6zM34 28h1v1h-1zM39 28h4v1h-4zM45 28h2v1h-2zM48 28h2v1h-2zM52 28h5v1h-5zM58 28h1v1h-1zM60 28h1v1h-1zM0 29h2v1h-2zM3 29h2v1h-2zM8 29h1v1h-1zM10 29h1v1h-1zM15 29h2v1h-2zM18 29h5v1h-5zM26 29h1v1h-1zM28 29h1v1h-1zM32 29h3v1h-3zM36 29h1v1h-1zM38 29h1v1h-1zM41 29h1v1h-1zM44 29h2v1h-2zM47 29h1v1h-1zM50 29h1v1h-1zM52 29h1v1h-1zM56 29h1v1h-1zM58 29h1v1h-1zM0 30h2v1h-2zM4 30h1v1h-1zM6 30h1v1h-1zM8 30h1v1h-1zM10 30h1v1h-1zM13 30h1v1h-1zM16 30h7v1h-7zM27 30h2v1h-2zM30 30h1v1h-1zM32 30h1v1h-1zM34 30h6v1h-6zM42 30h1v1h-1zM44 30h1v1h-1zM47 30h4v1h-4zM52 30h1v1h-1zM54 30h1v1h-1zM56 30h2v1h-2zM59 30h2v1h-2zM0 31h1v1h-1zM3 31h2v1h-2zM8 31h2v1h-2zM12 31h2v1h-2zM15 31h1v1h-1zM17 31h1v1h-1zM21 31h2v1h-2zM24 31h2v1h-2zM27 31h2v1h-2zM32 31h3v1h-3zM37 31h1v1h-1zM41 31h3v1h-3zM46 31h1v1h-1zM48 31h2v1h-2zM52 31h1v1h-1zM56 31h1v1h-1zM59 31h1v1h-1zM3 32h9v1h-9zM16 32h3v1h-3zM21 32h1v1h-1zM23 32h1v1h-1zM26 32h7v1h-7zM34 32h3v1h-3zM38 32h1v1h-1zM40 32h1v1h-1zM43 32h1v1h-1zM46 32h3v1h-3zM50 32h9v1h-9zM2 33h4v1h-4zM7 33h1v1h-1zM9 33h1v1h-1zM16 33h3v1h-3zM22 33h1v1h-1zM24 33h2v1h-2zM29 33h1v1h-1zM33 33h1v1h-1zM35 33h1v1h-1zM37 33h1v1h-1zM40 33h1v1h-1zM42 33h2v1h-2zM45 33h1v1h-1zM49 33h1v1h-1zM51 33h2v1h-2zM54 33h2v1h-2zM57 33h1v1h-1zM60 33h1v1h-1zM0 34h1v1h-1zM2 34h3v1h-3zM6 34h5v1h-5zM12 34h1v1h-1zM15 34h1v1h-1zM19 34h2v1h-2zM22 34h1v1h-1zM24 34h1v1h-1zM28 34h2v1h-2zM34 34h1v1h-1zM36 34h1v1h-1zM38 34h1v1h-1zM40 34h1v1h-1zM44 34h3v1h-3zM48 34h1v1h-1zM50 34h1v1h-1zM52 34h1v1h-1zM57 34h4v1h-4zM2 35h4v1h-4zM8 35h1v1h-1zM14 35h2v1h-2zM17 35h5v1h-5zM25 35h1v1h-1zM27 35h2v1h-2zM31 35h3v1h-3zM37 35h1v1h-1zM39 35h1v1h-1zM44 35h4v1h-4zM49 35h1v1h-1zM51 35h1v1h-1zM53 35h1v1h-1zM58 35h2v1h-2zM0 36h1v1h-1zM3 36h1v1h-1zM5 36h2v1h-2zM8 36h2v1h-2zM11 36h1v1h-1zM14 36h1v1h-1zM18 36h2v1h-2zM23 36h9v1h-9zM33 36h4v1h-4zM38 36h5v1h-5zM47 36h12v1h-12zM0 37h3v1h-3zM4 37h1v1h-1zM7 37h2v1h-2zM12 37h2v1h-2zM15 37h2v1h-2zM19 37h1v1h-1zM21 37h1v1h-1zM23 37h2v1h-2zM26 37h2v1h-2zM34 37h1v1h-1zM36 37h2v1h-2zM41 37h2v1h-2zM44 37h1v1h-1zM48 37h1v1h-1zM50 37h2v1h-2zM57 37h1v1h-1zM0 38h1v1h-1zM3 38h1v1h-1zM5 38h2v1h-2zM8 38h1v1h-1zM11 38h3v1h-3zM18 38h2v1h-2zM23 38h4v1h-4zM28 38h1v1h-1zM30 38h7v1h-7zM38 38h2v1h-2zM41 38h1v1h-1zM45 38h1v1h-1zM47 38h3v1h-3zM52 38h3v1h-3zM56 38h2v1h-2zM59 38h1v1h-1zM0 39h1v1h-1zM2 39h1v1h-1zM5 39h1v1h-1zM8 39h4v1h-4zM18 39h1v1h-1zM23 39h1v1h-1zM25 39h5v1h-5zM32 39h4v1h-4zM41 39h8v1h-8zM52 39h1v1h-1zM54 39h1v1h-1zM56 39h3v1h-3zM60 39h1v1h-1zM0 40h1v1h-1zM2 40h2v1h-2zM6 40h3v1h-3zM11 40h1v1h-1zM13 40h1v1h-1zM17 40h1v1h-1zM20 40h1v1h-1zM22 40h2v1h-2zM25 40h1v1h-1zM28 40h1v1h-1zM31 40h1v1h-1zM34 40h7v1h-7zM42 40h1v1h-1zM44 40h2v1h-2zM49 40h1v1h-1zM55 40h1v1h-1zM57 40h1v1h-1zM1 41h1v1h-1zM3 41h3v1h-3zM8 41h1v1h-1zM10 41h1v1h-1zM12 41h1v1h-1zM14 41h2v1h-2zM19 41h1v1h-1zM21 41h2v1h-2zM24 41h4v1h-4zM29 41h1v1h-1zM32 41h2v1h-2zM35 41h2v1h-2zM38 41h2v1h-2zM41 41h2v1h-2zM44 41h1v1h-1zM46 41h1v1h-1zM48 41h1v1h-1zM50 41h1v1h-1zM52 41h2v1h-2zM55 41h3v1h-3zM59 41h1v1h-1zM1 42h4v1h-4zM6 42h1v1h-1zM10 42h4v1h-4zM15 42h2v1h-2zM18 42h1v1h-1zM21 42h1v1h-1zM23 42h1v1h-1zM25 42h1v1h-1zM27 42h1v1h-1zM30 42h2v1h-2zM34 42h2v1h-2zM38 42h1v1h-1zM40 42h4v1h-4zM51 42h1v1h-1zM55 42h2v1h-2zM59 42h2v1h-2zM0 43h1v1h-1zM9 43h1v1h-1zM14 43h5v1h-5zM23 43h1v1h-1zM25 43h1v1h-1zM28 43h2v1h-2zM31 43h1v1h-1zM34 43h1v1h-1zM38 43h1v1h-1zM42 43h4v1h-4zM47 43h1v1h-1zM50 43h1v1h-1zM53 43h1v1h-1zM58 43h2v1h-2zM0 44h1v1h-1zM3 44h1v1h-1zM5 44h2v1h-2zM9 44h4v1h-4zM14 44h3v1h-3zM19 44h1v1h-1zM21 44h1v1h-1zM23 44h4v1h-4zM32 44h3v1h-3zM36 44h3v1h-3zM41 44h1v1h-1zM45 44h3v1h-3zM49 44h1v1h-1zM51 44h2v1h-2zM54 44h1v1h-1zM56 44h1v1h-1zM58 44h1v1h-1zM60 44h1v1h-1zM2 45h4v1h-4zM10 45h1v1h-1zM14 45h1v1h-1zM16 45h3v1h-3zM21 45h1v1h-1zM26 45h1v1h-1zM28 45h3v1h-3zM32 45h1v1h-1zM34 45h1v1h-1zM36 45h3v1h-3zM42 45h4v1h-4zM48 45h4v1h-4zM54 45h5v1h-5zM1 46h1v1h-1zM3 46h4v1h-4zM9 46h1v1h-1zM11 46h3v1h-3zM15 46h2v1h-2zM18 46h2v1h-2zM22 46h1v1h-1zM24 46h1v1h-1zM28 46h1v1h-1zM30 46h2v1h-2zM33 46h2v1h-2zM37 46h4v1h-4zM43 46h2v1h-2zM46 46h4v1h-4zM51 46h1v1h-1zM53 46h3v1h-3zM57 46h4v1h-4zM7 47h1v1h-1zM9 47h1v1h-1zM12 47h4v1h-4zM18 47h1v1h-1zM24 47h1v1h-1zM26 47h1v1h-1zM29 47h1v1h-1zM31 47h1v1h-1zM34 47h1v1h-1zM37 47h1v1h-1zM42 47h1v1h-1zM47 47h1v1h-1zM50 47h6v1h-6zM57 47h1v1h-1zM59 47h2v1h-2zM3 48h2v1h-2zM6 48h1v1h-1zM11 48h1v1h-1zM13 48h5v1h-5zM22 48h1v1h-1zM27 48h1v1h-1zM29 48h2v1h-2zM32 48h1v1h-1zM36 48h1v1h-1zM39 48h1v1h-1zM43 48h1v1h-1zM46 48h1v1h-1zM48 48h1v1h-1zM50 48h1v1h-1zM52 48h1v1h-1zM56 48h5v1h-5zM0 49h3v1h-3zM7 49h1v1h-1zM9 49h2v1h-2zM14 49h2v1h-2zM17 49h2v1h-2zM20 49h3v1h-3zM26 49h1v1h-1zM29 49h2v1h-2zM32 49h1v1h-1zM34 49h4v1h-4zM41 49h4v1h-4zM47 49h4v1h-4zM53 49h5v1h-5zM59 49h2v1h-2zM0 50h1v1h-1zM2 50h1v1h-1zM4 50h1v1h-1zM6 50h7v1h-7zM15 50h2v1h-2zM23 50h1v1h-1zM26 50h1v1h-1zM28 50h2v1h-2zM37 50h1v1h-1zM39 50h1v1h-1zM43 50h2v1h-2zM46 50h1v1h-1zM50 50h1v1h-1zM53 50h6v1h-6zM2 51h3v1h-3zM10 51h2v1h-2zM13 51h4v1h-4zM18 51h3v1h-3zM23 51h1v1h-1zM25 51h2v1h-2zM30 51h1v1h-1zM32 51h3v1h-3zM36 51h1v1h-1zM38 51h1v1h-1zM40 51h1v1h-1zM42 51h2v1h-2zM45 51h2v1h-2zM53 51h2v1h-2zM56 51h1v1h-1zM59 51h2v1h-2zM2 52h2v1h-2zM6 52h1v1h-1zM10 52h3v1h-3zM14 52h1v1h-1zM17 52h2v1h-2zM22 52h3v1h-3zM28 52h5v1h-5zM35 52h1v1h-1zM39 52h2v1h-2zM42 52h1v1h-1zM45 52h5v1h-5zM52 52h6v1h-6zM60 52h1v1h-1zM8 53h2v1h-2zM20 53h4v1h-4zM26 53h1v1h-1zM28 53h1v1h-1zM32 53h1v1h-1zM37 53h4v1h-4zM43 53h1v1h-1zM45 53h3v1h-3zM49 53h1v1h-1zM51 53h2v1h-2zM56 53h1v1h-1zM59 53h1v1h-1zM0 54h7v1h-7zM8 54h1v1h-1zM11 54h2v1h-2zM15 54h1v1h-1zM17 54h1v1h-1zM19 54h2v1h-2zM22 54h1v1h-1zM24 54h1v1h-1zM26 54h1v1h-1zM28 54h1v1h-1zM30 54h1v1h-1zM32 54h5v1h-5zM38 54h1v1h-1zM41 54h1v1h-1zM43 54h3v1h-3zM47 54h1v1h-1zM49 54h2v1h-2zM52 54h1v1h-1zM54 54h1v1h-1zM56 54h1v1h-1zM58 54h2v1h-2zM0 55h1v1h-1zM6 55h1v1h-1zM8 55h1v1h-1zM10 55h1v1h-1zM12 55h1v1h-1zM14 55h1v1h-1zM18 55h1v1h-1zM20 55h2v1h-2zM23 55h2v1h-2zM27 55h2v1h-2zM32 55h1v1h-1zM34 55h1v1h-1zM36 55h6v1h-6zM43 55h1v1h-1zM45 55h4v1h-4zM50 55h3v1h-3zM56 55h2v1h-2zM60 55h1v1h-1zM0 56h1v1h-1zM2 56h3v1h-3zM6 56h1v1h-1zM8 56h1v1h-1zM10 56h1v1h-1zM12 56h1v1h-1zM14 56h1v1h-1zM17 56h3v1h-3zM22 56h1v1h-1zM24 56h2v1h-2zM27 56h7v1h-7zM35 56h1v1h-1zM37 56h2v1h-2zM42 56h4v1h-4zM49 56h1v1h-1zM51 56h6v1h-6zM0 57h1v1h-1zM2 57h3v1h-3zM6 57h1v1h-1zM8 57h1v1h-1zM10 57h1v1h-1zM14 57h1v1h-1zM16 57h1v1h-1zM20 57h3v1h-3zM24 57h2v1h-2zM27 57h3v1h-3zM31 57h1v1h-1zM33 57h3v1h-3zM37 57h2v1h-2zM40 57h2v1h-2zM44 57h1v1h-1zM46 57h1v1h-1zM49 57h4v1h-4zM55 57h1v1h-1zM58 57h1v1h-1zM60 57h1v1h-1zM0 58h1v1h-1zM2 58h3v1h-3zM6 58h1v1h-1zM8 58h1v1h-1zM11 58h1v1h-1zM13 58h1v1h-1zM15 58h2v1h-2zM19 58h2v1h-2zM25 58h1v1h-1zM28 58h2v1h-2zM31 58h1v1h-1zM34 58h1v1h-1zM37 58h1v1h-1zM40 58h2v1h-2zM45 58h1v1h-1zM49 58h1v1h-1zM52 58h3v1h-3zM57 58h1v1h-1zM0 59h1v1h-1zM6 59h1v1h-1zM12 59h4v1h-4zM18 59h1v1h-1zM21 59h1v1h-1zM25 59h2v1h-2zM28 59h1v1h-1zM30 59h3v1h-3zM35 59h1v1h-1zM37 59h1v1h-1zM39 59h1v1h-1zM45 59h1v1h-1zM48 59h1v1h-1zM51 59h1v1h-1zM54 59h1v1h-1zM56 59h2v1h-2zM0 60h7v1h-7zM9 60h2v1h-2zM12 60h2v1h-2zM15 60h2v1h-2zM18 60h1v1h-1zM20 60h2v1h-2zM23 60h4v1h-4zM30 60h1v1h-1zM32 60h1v1h-1zM34 60h4v1h-4zM39 60h1v1h-1zM41 60h6v1h-6zM52 60h1v1h-1zM54 60h1v1h-1zM60 60h1v1h-1z" fill="#000"/></svg>
<span class="t" style="left:382.38px;top:17.97px;font:bold 12.79px/17px 'Liberation Sans',sans-serif;color:#1b3a57;transform:scaleX(1.0276);transform-origin:0 0;">HOME</span>
<span class="t" style="left:449.20px;top:17.97px;font:bold 12.79px/17px 'Liberation Sans',sans-serif;color:#1b3a57;transform:scaleX(0.9834);transform-origin:0 0;">FAQS</span>
<span class="t" style="left:509.42px;top:17.97px;font:bold 12.79px/17px 'Liberation Sans',sans-serif;color:#1b3a57;transform:scaleX(0.9929);transform-origin:0 0;">CONTACT US</span>
<span class="t" style="left:618.20px;top:17.97px;font:bold 12.79px/17px 'Liberation Sans',sans-serif;color:#1b3a57;transform:scaleX(0.9612);transform-origin:0 0;">BECOME PUBLISHER</span>
<span class="t" style="left:773.01px;top:17.97px;font:bold 12.79px/17px 'Liberation Sans',sans-serif;color:#04bfb3;transform:scaleX(0.9578);transform-origin:0 0;">RESEARCH SUBSCRIPTION</span>
<span class="t" style="left:1003.22px;top:17.30px;font:normal 15.29px/20px 'Liberation Sans',sans-serif;color:#c0202e;transform:scaleX(0.9482);transform-origin:0 0;-webkit-text-stroke:0.35px #c0202e;">0 items $0.00</span>
<span class="t" style="left:39.53px;top:106.36px;font:normal 15.7px/20px 'Liberation Sans',sans-serif;color:#7a7a7a;transform:scaleX(0.9136);transform-origin:0 0;will-change:transform;">Search Keyword</span>
<span class="t" style="left:902.45px;top:107.41px;font:bold 14.98px/19px 'Liberation Sans',sans-serif;color:#fff;transform:scaleX(0.9739);transform-origin:0 0;will-change:transform;-webkit-text-stroke:0.35px #fff;">SEARCH</span>
<span class="t" style="left:9.38px;top:185.97px;font:normal 15.39px/20px 'Liberation Sans',sans-serif;color:#6b6b6b;transform:scaleX(0.9325);transform-origin:0 0;">You are here:</span>
<span class="t" style="left:103.80px;top:185.97px;font:normal 15.39px/20px 'Liberation Sans',sans-serif;color:#fda20b;transform:scaleX(0.9464);transform-origin:0 0;">Home</span>
<span class="t" style="left:165.07px;top:185.97px;font:normal 15.39px/20px 'Liberation Sans',sans-serif;color:#fda20b;transform:scaleX(0.9433);transform-origin:0 0;">Catalog</span>
<span class="t" style="left:236.61px;top:185.97px;font:normal 15.39px/20px 'Liberation Sans',sans-serif;color:#fda20b;transform:scaleX(0.9261);transform-origin:0 0;">Pharma &amp; Healthcare</span>
<span class="t" style="left:394.97px;top:185.97px;font:normal 15.39px/20px 'Liberation Sans',sans-serif;color:#fda20b;transform:scaleX(0.9284);transform-origin:0 0;">Medical Devices</span>
<span class="t" style="left:521.53px;top:185.97px;font:normal 15.39px/20px 'Liberation Sans',sans-serif;color:#fda20b;transform:scaleX(0.9281);transform-origin:0 0;">Healthcare</span>
<span class="t" style="left:613.25px;top:185.97px;font:normal 15.39px/20px 'Liberation Sans',sans-serif;color:#fda20b;transform:scaleX(0.9368);transform-origin:0 0;">Country Overview (Pharma &amp; Healthcare)</span>
<span class="t" style="left:150.42px;top:185.33px;font:normal 16.64px/22px 'Liberation Sans',sans-serif;color:#777;transform:scaleX(0.7428);transform-origin:0 0;">&gt;</span>
<span class="t" style="left:223.38px;top:185.33px;font:normal 16.64px/22px 'Liberation Sans',sans-serif;color:#777;transform:scaleX(0.7538);transform-origin:0 0;">&gt;</span>
<span class="t" style="left:381.17px;top:185.33px;font:normal 16.64px/22px 'Liberation Sans',sans-serif;color:#777;transform:scaleX(0.6705);transform-origin:0 0;">&gt;</span>
<span class="t" style="left:508.04px;top:185.33px;font:normal 16.64px/22px 'Liberation Sans',sans-serif;color:#777;transform:scaleX(0.6658);transform-origin:0 0;">&gt;</span>
<span class="t" style="left:599.04px;top:185.33px;font:normal 16.64px/22px 'Liberation Sans',sans-serif;color:#777;transform:scaleX(0.6854);transform-origin:0 0;">&gt;</span>
<span class="t" style="left:8.42px;top:246.97px;font:normal 31.82px/41px 'DejaVu Sans Light','DejaVu Sans',sans-serif;color:#0dbfb3;transform:scaleX(1.0619);transform-origin:0 0;-webkit-text-stroke:0.75px #0dbfb3;">Global</span>
<span class="t" style="left:122.06px;top:246.97px;font:normal 31.82px/41px 'DejaVu Sans Light','DejaVu Sans',sans-serif;color:#0dbfb3;transform:scaleX(1.0750);transform-origin:0 0;-webkit-text-stroke:0.75px #0dbfb3;">and</span>
<span class="t" style="left:193.81px;top:246.97px;font:normal 31.82px/41px 'DejaVu Sans Light','DejaVu Sans',sans-serif;color:#0dbfb3;transform:scaleX(1.0248);transform-origin:0 0;-webkit-text-stroke:0.75px #0dbfb3;">Chinese</span>
<span class="t" style="left:333.22px;top:246.97px;font:normal 31.82px/41px 'DejaVu Sans Light','DejaVu Sans',sans-serif;color:#0dbfb3;transform:scaleX(1.0519);transform-origin:0 0;-webkit-text-stroke:0.75px #0dbfb3;">Cervical</span>
<span class="t" style="left:474.01px;top:246.97px;font:normal 31.82px/41px 'DejaVu Sans Light','DejaVu Sans',sans-serif;color:#0dbfb3;transform:scaleX(1.0048);transform-origin:0 0;-webkit-text-stroke:0.75px #0dbfb3;">Lateral</span>
<span class="t" style="left:591.98px;top:246.97px;font:normal 31.82px/41px 'DejaVu Sans Light','DejaVu Sans',sans-serif;color:#0dbfb3;transform:scaleX(1.0578);transform-origin:0 0;-webkit-text-stroke:0.75px #0dbfb3;">Mass</span>
<span class="t" style="left:685.96px;top:246.97px;font:normal 31.82px/41px 'DejaVu Sans Light','DejaVu Sans',sans-serif;color:#0dbfb3;transform:scaleX(1.1031);transform-origin:0 0;-webkit-text-stroke:0.75px #0dbfb3;">Screw</span>
<span class="t" style="left:798.11px;top:246.97px;font:normal 31.82px/41px 'DejaVu Sans Light','DejaVu Sans',sans-serif;color:#0dbfb3;transform:scaleX(0.9594);transform-origin:0 0;-webkit-text-stroke:0.75px #0dbfb3;">Fixator</span>
<span class="t" style="left:914.67px;top:246.97px;font:normal 31.82px/41px 'DejaVu Sans Light','DejaVu Sans',sans-serif;color:#0dbfb3;transform:scaleX(0.9825);transform-origin:0 0;-webkit-text-stroke:0.75px #0dbfb3;">Industry,</span>
<span class="t" style="left:1060.37px;top:246.97px;font:normal 31.82px/41px 'DejaVu Sans Light','DejaVu Sans',sans-serif;color:#0dbfb3;transform:scaleX(0.9486);transform-origin:0 0;-webkit-text-stroke:0.75px #0dbfb3;">2018</span>
<span class="t" style="left:8.43px;top:288.87px;font:normal 31.82px/41px 'DejaVu Sans Light','DejaVu Sans',sans-serif;color:#0dbfb3;transform:scaleX(1.0266);transform-origin:0 0;-webkit-text-stroke:0.75px #0dbfb3;">Market</span>
<span class="t" style="left:129.68px;top:288.87px;font:normal 31.82px/41px 'DejaVu Sans Light','DejaVu Sans',sans-serif;color:#0dbfb3;transform:scaleX(1.0385);transform-origin:0 0;-webkit-text-stroke:0.75px #0dbfb3;">Research</span>
<span class="t" style="left:289.63px;top:288.87px;font:normal 31.82px/41px 'DejaVu Sans Light','DejaVu Sans',sans-serif;color:#0dbfb3;transform:scaleX(1.0233);transform-origin:0 0;-webkit-text-stroke:0.75px #0dbfb3;">Report</span>
<span class="t" style="left:48.79px;top:492.45px;font:normal 17.16px/22px 'DejaVu Sans Light','DejaVu Sans',sans-serif;color:#2f2f2f;transform:scaleX(0.9713);transform-origin:0 0;-webkit-text-stroke:0.45px #2f2f2f;">Global and Chinese Cervical Lateral</span>
<span class="t" style="left:49.26px;top:513.25px;font:normal 17.16px/22px 'DejaVu Sans Light','DejaVu Sans',sans-serif;color:#2f2f2f;transform:scaleX(0.9468);transform-origin:0 0;-webkit-text-stroke:0.45px #2f2f2f;">Mass Screw Fixator Industry, 2018</span>
<span class="t" style="left:49.19px;top:534.45px;font:normal 17.16px/22px 'DejaVu Sans Light','DejaVu Sans',sans-serif;color:#2f2f2f;transform:scaleX(0.9763);transform-origin:0 0;-webkit-text-stroke:0.45px #2f2f2f;">Market Research Report</span>
<span class="t" style="left:82.44px;top:794.07px;font:normal 13.94px/18px 'DejaVu Sans',sans-serif;color:#e8eaee;transform:scaleX(1.0234);transform-origin:0 0;">www.marketresearchreports.com</span>
<span class="t" style="left:39.86px;top:841.97px;font:normal 15.39px/20px 'Liberation Sans',sans-serif;color:#fda20b;transform:scaleX(0.9436);transform-origin:0 0;">Printer version</span>
<span class="t" style="left:164.31px;top:841.97px;font:normal 15.39px/20px 'Liberation Sans',sans-serif;color:#fda20b;transform:scaleX(0.9251);transform-origin:0 0;">Send by email</span>
<span class="t" style="left:414.04px;top:372.84px;font:bold 15.18px/20px 'Liberation Sans',sans-serif;color:#0b7bc1;transform:scaleX(0.9417);transform-origin:0 0;">Publication ID:</span>
<span class="t" style="left:414.20px;top:397.74px;font:bold 15.18px/20px 'Liberation Sans',sans-serif;color:#0b7bc1;transform:scaleX(0.9429);transform-origin:0 0;">Publication Date:</span>
<span class="t" style="left:414.20px;top:422.84px;font:bold 15.18px/20px 'Liberation Sans',sans-serif;color:#0b7bc1;transform:scaleX(0.8942);transform-origin:0 0;">Pages:</span>
<span class="t" style="left:414.20px;top:447.84px;font:bold 15.18px/20px 'Liberation Sans',sans-serif;color:#0b7bc1;transform:scaleX(0.9216);transform-origin:0 0;">Publisher:</span>
<span class="t" style="left:414.35px;top:472.84px;font:bold 15.18px/20px 'Liberation Sans',sans-serif;color:#0b7bc1;transform:scaleX(0.9234);transform-origin:0 0;">Countries:</span>
<span class="t" style="left:543.97px;top:372.77px;font:normal 15.39px/20px 'Liberation Sans',sans-serif;color:#6b6b6b;transform:scaleX(0.8384);transform-origin:0 0;">PRF04180023</span>
<span class="t" style="left:544.64px;top:397.67px;font:normal 15.39px/20px 'Liberation Sans',sans-serif;color:#6b6b6b;transform:scaleX(0.8453);transform-origin:0 0;">April 17, 2018</span>
<span class="t" style="left:544.00px;top:422.77px;font:normal 15.39px/20px 'Liberation Sans',sans-serif;color:#6b6b6b;transform:scaleX(0.7829);transform-origin:0 0;">138</span>
<span class="t" style="left:543.91px;top:447.77px;font:normal 15.39px/20px 'Liberation Sans',sans-serif;color:#6b6b6b;transform:scaleX(0.8922);transform-origin:0 0;">Prof Research</span>
<span class="t" style="left:544.29px;top:472.77px;font:normal 15.39px/20px 'Liberation Sans',sans-serif;color:#fda20b;transform:scaleX(0.9494);transform-origin:0 0;">Global</span>
<span class="t" style="left:544.32px;top:497.67px;font:normal 15.39px/20px 'Liberation Sans',sans-serif;color:#fda20b;transform:scaleX(0.8836);transform-origin:0 0;">China</span>
<span class="t" style="left:690.88px;top:522.15px;font:bold 18.62px/24px 'Liberation Sans',sans-serif;color:#b8152b;transform:scaleX(1.0119);transform-origin:0 0;">$3,000.00</span>
<span class="t" style="left:414.06px;top:547.57px;font:normal 15.39px/20px 'Liberation Sans',sans-serif;color:#6b6b6b;transform:scaleX(0.9283);transform-origin:0 0;">Publication License Type</span>
<span class="t" style="left:576.70px;top:550.19px;font:bold 15.6px/20px 'Liberation Sans',sans-serif;color:#e0202e;transform:scaleX(0.8391);transform-origin:0 0;">*</span>
<span class="t" style="left:468.91px;top:599.11px;font:normal 16.43px/21px 'Liberation Sans',sans-serif;color:#2e2e2e;transform:scaleX(0.7800);transform-origin:0 0;">SINGLE USER LICENSE (PDF), $3,000.00</span>
<span class="t" style="left:469.08px;top:666.11px;font:normal 16.43px/21px 'Liberation Sans',sans-serif;color:#2e2e2e;transform:scaleX(0.7821);transform-origin:0 0;">SITE LICENSE (PDF), $3,800.00</span>
<span class="t" style="left:469.32px;top:733.21px;font:normal 16.43px/21px 'Liberation Sans',sans-serif;color:#2e2e2e;transform:scaleX(0.8022);transform-origin:0 0;">GLOBAL LICENSE (PDF), $5,000.00</span>
<span class="t" style="left:414.78px;top:784.67px;font:normal 15.39px/20px 'Liberation Sans',sans-serif;color:#6b6b6b;transform:scaleX(0.9343);transform-origin:0 0;">Please choose the suitable license type from above.</span>
<span class="t" style="left:414.78px;top:809.67px;font:normal 15.39px/20px 'Liberation Sans',sans-serif;color:#6b6b6b;transform:scaleX(0.9354);transform-origin:0 0;">More details are at given under tab &quot;Report License</span>
<span class="t" style="left:415.01px;top:834.67px;font:normal 15.39px/20px 'Liberation Sans',sans-serif;color:#6b6b6b;transform:scaleX(0.9379);transform-origin:0 0;">Types&quot; below.</span>
<span class="t" style="left:531.86px;top:889.57px;font:bold 16.54px/22px 'Liberation Sans',sans-serif;color:#fff;transform:scaleX(1.0789);transform-origin:0 0;-webkit-text-stroke:0.45px #fff;">ADD</span>
<span class="t" style="left:577.94px;top:889.57px;font:bold 16.54px/22px 'Liberation Sans',sans-serif;color:#fff;transform:scaleX(1.0470);transform-origin:0 0;-webkit-text-stroke:0.45px #fff;">TO</span>
<span class="t" style="left:609.08px;top:889.57px;font:bold 16.54px/22px 'Liberation Sans',sans-serif;color:#fff;transform:scaleX(1.0081);transform-origin:0 0;-webkit-text-stroke:0.45px #fff;">CART</span>
<span class="t" style="left:873.67px;top:384.52px;font:normal 24.75px/32px 'Liberation Sans',sans-serif;color:#1b3a57;transform:scaleX(0.9780);transform-origin:0 0;">Why to buy from us?</span>
<span class="t" style="left:837.91px;top:459.21px;font:normal 16.12px/21px 'Liberation Sans',sans-serif;color:#fff;transform:scaleX(1.0634);transform-origin:0 0;-webkit-text-stroke:0.3px #fff;">Globally Trusted Brand</span>
<span class="t" style="left:834.60px;top:620.31px;font:normal 16.12px/21px 'Liberation Sans',sans-serif;color:#fff;transform:scaleX(1.0781);transform-origin:0 0;-webkit-text-stroke:0.3px #fff;">Shop With Confidence</span>
<span class="t" style="left:834.68px;top:683.81px;font:normal 16.12px/21px 'Liberation Sans',sans-serif;color:#fff;transform:scaleX(1.0521);transform-origin:0 0;-webkit-text-stroke:0.3px #fff;">Secure Checkout</span>
<span class="t" style="left:834.23px;top:746.61px;font:normal 16.12px/21px 'Liberation Sans',sans-serif;color:#fff;transform:scaleX(1.0753);transform-origin:0 0;-webkit-text-stroke:0.3px #fff;">Frequently Asked Questions</span>
<span class="t" style="left:820.41px;top:509.87px;font:normal 15.39px/20px 'Liberation Sans',sans-serif;color:#6b6b6b;transform:scaleX(0.9517);transform-origin:0 0;">We help executives from</span>
<span class="t" style="left:982.79px;top:509.87px;font:normal 15.39px/20px 'Liberation Sans',sans-serif;color:#fda20b;transform:scaleX(0.9407);transform-origin:0 0;">Fortune 500</span>
<span class="t" style="left:1065.00px;top:509.87px;font:normal 15.39px/20px 'Liberation Sans',sans-serif;color:#6b6b6b;transform:scaleX(0.9541);transform-origin:0 0;">firms to</span>
<span class="t" style="left:819.46px;top:534.77px;font:normal 15.39px/20px 'Liberation Sans',sans-serif;color:#6b6b6b;transform:scaleX(0.9490);transform-origin:0 0;">Start-ups with their market research needs thus we</span>
<span class="t" style="left:819.96px;top:559.87px;font:normal 15.39px/20px 'Liberation Sans',sans-serif;color:#6b6b6b;transform:scaleX(0.9490);transform-origin:0 0;">can help you too.</span>
<span class="t" style="left:183.20px;top:9.97px;font:bold 6.45px/8px 'Liberation Sans',sans-serif;color:#3a4670;letter-spacing:-0.150px;">®</span>
<span class="t" style="left:151.00px;top:10.74px;font:bold 9.98px/13px 'Liberation Sans',sans-serif;color:#1a2f5e;transform:scaleX(0.9552);transform-origin:0 0;-webkit-text-stroke:0.3px #1a2f5e;">Market</span>
<span class="t" style="left:150.62px;top:21.74px;font:bold 9.98px/13px 'Liberation Sans',sans-serif;color:#1a2f5e;transform:scaleX(0.8564);transform-origin:0 0;-webkit-text-stroke:0.3px #1a2f5e;">Research</span>
<span class="t" style="left:150.73px;top:31.84px;font:bold 9.98px/13px 'Liberation Sans',sans-serif;color:#1a2f5e;transform:scaleX(0.8530);transform-origin:0 0;-webkit-text-stroke:0.3px #1a2f5e;">Reports</span>
</body>
</html>
